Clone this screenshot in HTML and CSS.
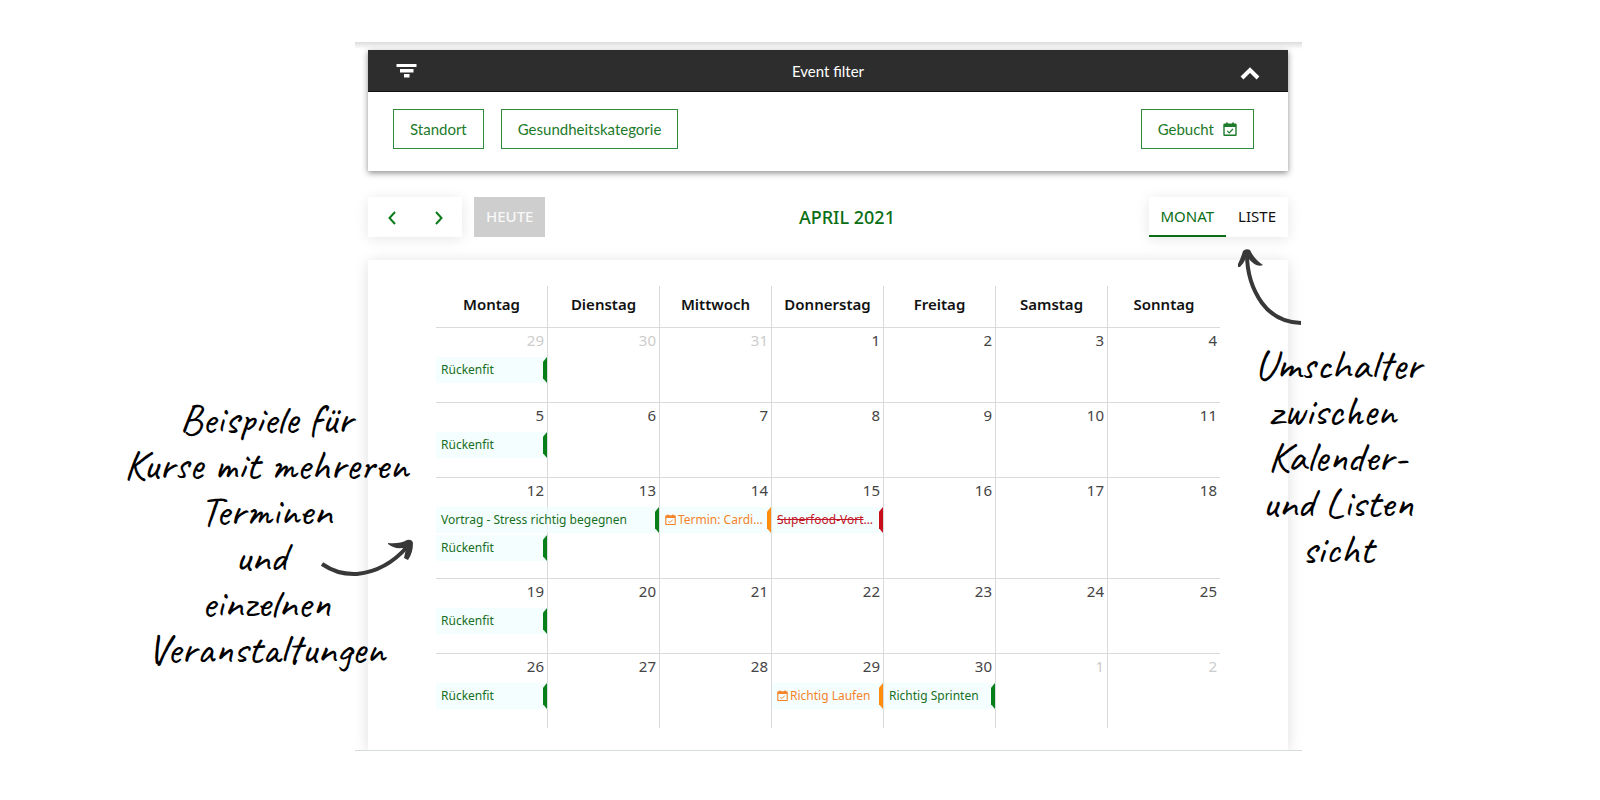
FILE: index.html
```html
<!DOCTYPE html>
<html lang="de">
<head>
<meta charset="utf-8">
<meta name="viewport" content="width=device-width, initial-scale=1">
<title>Event-Kalender April 2021</title>
<link rel="stylesheet" href="styles.css">
</head>
<body>
<svg class="sprite" aria-hidden="true">
  <symbol id="booked" viewBox="0 0 14 15">
    <path fill="currentColor" fill-rule="evenodd" d="M1.5 1.500H3V.5h1.800v1h4.400v-1H11v1h1.500q1.200 0 1.200 1.200v10.100q0 1.200-1.200 1.200h-11Q.3 14 .3 12.800V2.700Q.3 1.500 1.500 1.500zM1.700 5v7.600h10.600V5z"/>
    <path fill="none" stroke="currentColor" stroke-width="1.200" d="M4.200 8.900l2 2 3.700-3.900"/>
  </symbol>
</svg>
<main class="stage">
  <section class="app">
    <section class="filter">
      <header class="filter-bar">
        <svg class="filter-icon" viewBox="0 0 20 14" aria-hidden="true"><path fill="#fff" d="M0 0h20v3H0zM3.500 5h13.500v3.500H3.500zM7.500 10h5.500v3.500H7.500z"/></svg>
        <h1 class="filter-title">Event filter</h1>
        <button class="collapse" type="button" aria-label="Filter einklappen"><svg viewBox="0 0 20 13" aria-hidden="true"><path fill="none" stroke="#fff" stroke-width="4" d="M2 11l8-8 8 8"/></svg></button>
      </header>
      <div class="filter-body">
        <button class="chip" type="button">Standort</button>
        <button class="chip" type="button">Gesundheitskategorie</button>
        <button class="chip chip-booked" type="button">Gebucht <svg class="booked" aria-hidden="true"><use href="#booked"/></svg></button>
      </div>
    </section>

    <nav class="toolbar">
      <div class="toolbar-left">
        <div class="arrows">
          <button class="arrow" type="button" aria-label="Vorheriger Monat"><svg viewBox="0 0 8 14" aria-hidden="true"><path d="M7 1L1.500 7L7 13"/></svg></button>
          <button class="arrow" type="button" aria-label="Nächster Monat"><svg viewBox="0 0 8 14" aria-hidden="true"><path d="M1 1l5.500 6L1 13"/></svg></button>
        </div>
        <button class="today" type="button">HEUTE</button>
      </div>
      <h2 class="month">APRIL 2021</h2>
      <div class="views">
        <button class="view view-active" type="button">MONAT</button>
        <button class="view" type="button">LISTE</button>
      </div>
    </nav>

    <section class="card">
      <table class="calendar">
        <thead>
          <tr><th>Montag</th><th>Dienstag</th><th>Mittwoch</th><th>Donnerstag</th><th>Freitag</th><th>Samstag</th><th>Sonntag</th></tr>
        </thead>
        <tbody>
          <tr>
            <td class="other"><span class="day">29</span><a class="event" href="#"><span>Rückenfit</span></a></td>
            <td class="other"><span class="day">30</span></td>
            <td class="other"><span class="day">31</span></td>
            <td><span class="day">1</span></td><td><span class="day">2</span></td><td><span class="day">3</span></td><td><span class="day">4</span></td>
          </tr>
          <tr>
            <td><span class="day">5</span><a class="event" href="#"><span>Rückenfit</span></a></td>
            <td><span class="day">6</span></td><td><span class="day">7</span></td><td><span class="day">8</span></td><td><span class="day">9</span></td><td><span class="day">10</span></td><td><span class="day">11</span></td>
          </tr>
          <tr class="tall">
            <td><span class="day">12</span><a class="event two-days" href="#"><span>Vortrag - Stress richtig begegnen</span></a><a class="event" href="#"><span>Rückenfit</span></a></td>
            <td><span class="day">13</span></td>
            <td><span class="day">14</span><a class="event appointment" href="#"><svg class="booked" aria-hidden="true"><use href="#booked"/></svg><span>Termin: Cardi…</span></a></td>
            <td><span class="day">15</span><a class="event cancelled" href="#"><span><s>Superfood-Vort</s>…</span></a></td>
            <td><span class="day">16</span></td><td><span class="day">17</span></td><td><span class="day">18</span></td>
          </tr>
          <tr>
            <td><span class="day">19</span><a class="event" href="#"><span>Rückenfit</span></a></td>
            <td><span class="day">20</span></td><td><span class="day">21</span></td><td><span class="day">22</span></td><td><span class="day">23</span></td><td><span class="day">24</span></td><td><span class="day">25</span></td>
          </tr>
          <tr>
            <td><span class="day">26</span><a class="event" href="#"><span>Rückenfit</span></a></td>
            <td><span class="day">27</span></td><td><span class="day">28</span></td>
            <td><span class="day">29</span><a class="event appointment" href="#"><svg class="booked" aria-hidden="true"><use href="#booked"/></svg><span>Richtig Laufen</span></a></td>
            <td><span class="day">30</span><a class="event" href="#"><span>Richtig Sprinten</span></a></td>
            <td class="other"><span class="day">1</span></td><td class="other"><span class="day">2</span></td>
          </tr>
        </tbody>
      </table>
    </section>
  </section>

  <p class="note note-left">Beispiele für<br>Kurse mit mehreren<br>Terminen<br>und&nbsp;<br>einzelnen<br>Veranstaltungen</p>
  <svg class="pointer pointer-left" viewBox="0 0 94 38" aria-hidden="true">
    <path fill="none" stroke="#383838" stroke-width="4" d="M2 24Q18 35 37 34Q66 31 87 7"/>
    <path fill="#383838" d="M68 3Q80 4 87 0Q92-1 93 3Q93 13 88 20L84 18Q85 13 86 9L82 8Q74 9 68 4z"/>
  </svg>
  <p class="note note-right">Umschalter<br>zwischen&nbsp;<br>Kalender-<br>und Listen<br>sicht</p>
  <svg class="pointer pointer-right" viewBox="0 0 64 76" aria-hidden="true">
    <path fill="none" stroke="#383838" stroke-width="4" d="M9 5Q9 33 24 54Q38 73 63 74"/>
    <path fill="#383838" d="M0 15Q3 9 5 2Q8-1 12 1Q16 10 25 16Q18 19 10 9L8 9Q6 14 2 18L0 18z"/>
  </svg>
</main>
</body>
</html>
```
FILE: styles.css
```css
* { box-sizing: border-box; }

body {
  margin: 0;
  background: #fff;
  color: #111;
  font-family: "Noto Sans", sans-serif;
  font-size: 15px;
}

button { font-family: inherit; cursor: pointer; }
.sprite { position: absolute; width: 0; height: 0; }

.stage {
  position: relative;
  display: grid;
  grid-template-columns: 355fr 947fr 298fr;
  padding-top: 42px;
}

.app {
  grid-column: 2;
  padding: 8px 14px 0 13px;
  overflow: hidden;
  border-bottom: 1px solid #d5dadd;
  background: linear-gradient(#dcdcdc, #fff 7px);
}

/* Filter */
.filter { box-shadow: 0 2px 6px rgba(0, 0, 0, .45); background: #fff; }

.filter-bar {
  display: grid;
  grid-template-columns: 1fr auto 1fr;
  align-items: center;
  height: 42px;
  padding: 0 28px;
  background: #2d2d2d;
  border-bottom: 1px solid #111;
  color: #fff;
}
.filter-icon { width: 21px; height: 14px; }
.filter-title { margin: 0; font: 400 15px/20px Lato, sans-serif; }
.collapse { justify-self: end; width: 20px; height: 20px; padding: 0; border: 0; background: none; }
.collapse svg { display: block; width: 20px; height: 13px; margin-top: 5px; }

.filter-body { display: flex; gap: 17px; padding: 17px 34px 22px 25px; }
.chip {
  height: 40px;
  padding: 0 16px;
  border: 1px solid #2f8a3a;
  background: #fff;
  color: #1d7a2a;
  font: 400 15px/20px Lato, sans-serif;
}
.chip-booked { display: flex; align-items: center; gap: 9px; margin-left: auto; }
.booked { flex: none; width: 14px; height: 15px; }

/* Toolbar */
.toolbar {
  display: flex;
  justify-content: space-between;
  align-items: center;
  margin: 26px 0 23px;
}
.toolbar-left { display: flex; gap: 12px; }
.arrows, .views { display: flex; background: #fff; box-shadow: 0 2px 14px rgba(0, 0, 0, .1); }
.arrow { width: 47px; height: 40px; padding: 0; border: 0; background: none; }
.arrow svg { width: 8px; height: 14px; vertical-align: middle; fill: none; stroke: #0b7a1a; stroke-width: 2; }
.today {
  height: 40px;
  padding: 0 12px 2px;
  border: 0;
  background: #cecece;
  color: #f8f8f8;
  font-size: 15px;
  font-weight: 500;
}
.month { margin: 0; color: #0a6e14; font-size: 18px; font-weight: 500; line-height: 24px; }
.view {
  height: 40px;
  padding: 0 12px;
  border: 0;
  border-bottom: 2px solid transparent;
  background: none;
  color: #111;
  font-size: 15px;
}
.view-active { border-color: #0a6e14; color: #0a6e14; }

/* Calendar */
.card {
  padding: 26px 68px 22px;
  background: #fff;
  box-shadow: 0 2px 14px rgba(0, 0, 0, .13);
}
.calendar { width: 100%; table-layout: fixed; border-spacing: 0; }
.calendar th {
  height: 42px;
  padding: 0 0 5px;
  font-weight: 600;
}
.calendar th, .calendar td {
  border-right: 1px solid #d9dadb;
  border-bottom: 1px solid #d9dadb;
}
.calendar td { height: 75px; padding: 0; vertical-align: top; }
.calendar .tall td { height: 101px; }
.calendar th:last-child, .calendar td:last-child { border-right: 0; }
.calendar tbody tr:last-child td { height: 74px; border-bottom: 0; }

.day {
  display: block;
  height: 29px;
  padding: 1px 3px 0 0;
  color: #444;
  line-height: 22px;
  text-align: right;
}
.other .day { color: #ccc; }

.event {
  position: relative;
  z-index: 1;
  display: flex;
  align-items: center;
  gap: 2px;
  height: 26px;
  margin-bottom: 2px;
  padding: 0 5px;
  background: rgba(240, 253, 255, .7);
  color: #176f22;
  font-size: 12px;
  line-height: 18px;
  text-decoration: none;
  white-space: nowrap;
}
.event::after {
  content: "";
  position: absolute;
  inset: 0 0 0 auto;
  width: 4px;
  background: #07801a;
  clip-path: polygon(100% 0, 100% 100%, 0 82%, 0 18%);
}
.event.two-days { width: calc(200% + 1px); }
.event.appointment { color: #f5832a; }
.event.appointment::after { background: #ff8c0a; }
.event.cancelled { color: #c41425; }
.event.cancelled::after { background: #c90d1b; }
.event .booked { width: 11px; height: 12px; }

/* Handwritten annotations lying over the calendar's edges */
.note {
  position: absolute;
  margin: 0;
  color: #000;
  font: 400 43px/46px Caveat, cursive;
  text-align: center;
  white-space: nowrap;
}
.note-left { top: 396px; right: 74.500%; }
.note-right { top: 342px; left: 78.400%; }
.pointer { position: absolute; overflow: visible; }
.pointer-left { top: 540px; left: 20%; width: 94px; height: 38px; }
.pointer-right { top: 249px; left: 77.400%; width: 64px; height: 76px; }
```
